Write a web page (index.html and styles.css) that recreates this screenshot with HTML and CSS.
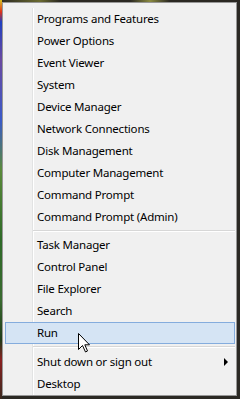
FILE: index.html
```html
<!DOCTYPE html>
<html>
<head>
<meta charset="utf-8">
<link rel="stylesheet" href="styles.css">
</head>
<body>
<div class="desktop">
  <div class="menu">
    <ul class="list">
      <li class="item"><span class="label">Programs and Features</span></li>
      <li class="item"><span class="label">Power Options</span></li>
      <li class="item"><span class="label">Event Viewer</span></li>
      <li class="item"><span class="label">System</span></li>
      <li class="item"><span class="label">Device Manager</span></li>
      <li class="item"><span class="label">Network Connections</span></li>
      <li class="item"><span class="label">Disk Management</span></li>
      <li class="item"><span class="label">Computer Management</span></li>
      <li class="item"><span class="label">Command Prompt</span></li>
      <li class="item"><span class="label">Command Prompt (Admin)</span></li>
      <li class="sep"></li>
      <li class="item"><span class="label">Task Manager</span></li>
      <li class="item"><span class="label">Control Panel</span></li>
      <li class="item"><span class="label">File Explorer</span></li>
      <li class="item"><span class="label">Search</span></li>
      <li class="item active"><span class="label">Run</span></li>
      <li class="sep sep-wide"></li>
      <li class="item"><span class="label">Shut down or sign out</span><span class="arrow"></span></li>
      <li class="item"><span class="label">Desktop</span></li>
    </ul>
  </div>
  <svg class="cursor" width="13" height="20" viewBox="0 0 13 20">
    <path d="M0.5 0.5 L0.5 16.5 L4.5 12.5 L7.5 19 L9.5 18 L6.8 11.8 L11.5 11.8 Z" fill="#fff" stroke="#000" stroke-width="1" stroke-linejoin="miter"/>
  </svg>
</div>
</body>
</html>
```
FILE: styles.css
```css
html, body {
  margin: 0;
  padding: 0;
  background: #2b2924;
}

.desktop {
  position: relative;
  width: 240px;
  height: 399px;
  box-sizing: border-box;
  padding: 2px 3px 0 2px;
  background:
    linear-gradient(to bottom, #d8c020 0, #e03018 12px, #2040c0 22px, #6a4aa0 60px, #3a5ac8 120px, #5a8a3a 170px, #2f6a28 240px, #3a6a30 300px, #1f3a18 340px, #8a2020 360px, #3a2a20 399px) left top / 2px 100% no-repeat,
    linear-gradient(to right, #2a2822 0, #6a6a30 40px, #2a2822 60px, #2a2822 130px, #8a8a40 150px, #2a2822 170px) left top / 100% 2px no-repeat,
    #2b2924;
}

.menu {
  width: 235px;
  box-sizing: border-box;
  border: 1px solid #979797;
  background: #f0f0f0;
  padding: 5px 1px 0 2px;
  font-family: "Noto Sans", "Open Sans", sans-serif;
  font-size: 11.5px;
  letter-spacing: -0.2px;
  color: #000;
}

.list {
  margin: 0;
  padding: 0;
  list-style: none;
  background: linear-gradient(to right, transparent 27px, #e2e3e3 27px, #e2e3e3 28px, #ffffff 28px, #ffffff 29px, transparent 29px);
}

.item {
  display: flex;
  align-items: center;
  height: 22px;
  box-sizing: border-box;
  padding-left: 32px;
  line-height: 22px;
  white-space: nowrap;
}

.item .label {
  flex: 1;
}

.item.active {
  background: #d5e4f4;
  border: 1px solid #84acdd;
  padding-left: 31px;
  line-height: 20px;
}

.sep {
  height: 6px;
  margin-left: 28px;
  background:
    linear-gradient(#d7d7d7, #d7d7d7) 0 2px / 100% 1px no-repeat,
    linear-gradient(#ffffff, #ffffff) 0 3px / 100% 1px no-repeat;
}

.sep-wide {
  height: 7px;
}

.arrow {
  width: 0;
  height: 0;
  border-left: 4px solid #000;
  border-top: 4px solid transparent;
  border-bottom: 4px solid transparent;
  margin-right: 7px;
}

.cursor {
  position: absolute;
  left: 78px;
  top: 333px;
}
```
